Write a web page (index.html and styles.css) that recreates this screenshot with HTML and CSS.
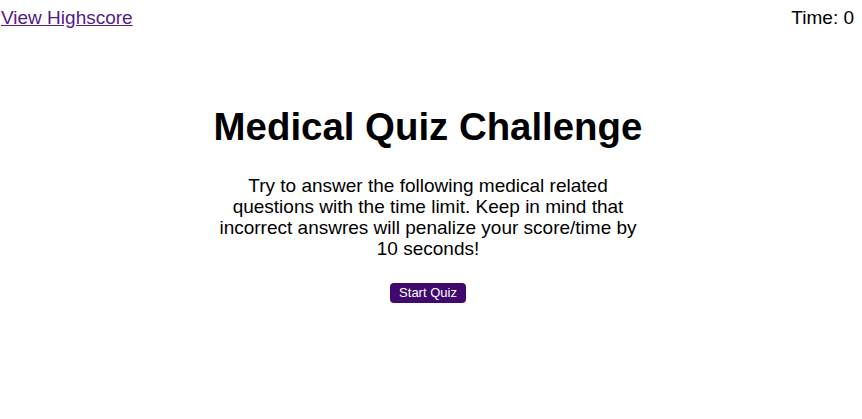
FILE: index.html
```html
<!DOCTYPE html>
<html>
<head>
<meta charset="utf-8">
<link rel="stylesheet" href="styles.css">
</head>
<body>
<header class="top">
  <a href="#" class="hs">View Highscore</a>
  <div class="timer">Time: 0</div>
</header>
<main class="intro">
  <h1 class="title">Medical Quiz Challenge</h1>
  <p class="desc">Try to answer the following medical related questions with the time limit. Keep in mind that incorrect answres will penalize your score/time by 10 seconds!</p>
  <button class="start">Start Quiz</button>
</main>
</body>
</html>
```
FILE: styles.css
```css
body {
  margin: 0;
  font-family: "Liberation Sans", Arial, sans-serif;
  color: #000;
  background: #fff;
}
.top {
  display: flex;
  justify-content: space-between;
  align-items: flex-start;
  padding: 7px 8px 0 1px;
  font-size: 19px;
  line-height: 22px;
}
.hs {
  color: #551a8b;
  text-decoration: underline;
}
.intro {
  display: flex;
  flex-direction: column;
  align-items: center;
  padding-right: 6px;
  margin-top: 76px;
}
.title {
  font-size: 38.4px;
  line-height: 44px;
  font-weight: bold;
  margin: 0 0 26px;
}
.desc {
  width: 431px;
  text-align: center;
  font-size: 19px;
  line-height: 21px;
  margin: 0 0 24px;
}
.start {
  background: #40096b;
  color: #fff;
  border: none;
  border-radius: 4px;
  font-family: "Liberation Sans", Arial, sans-serif;
  font-size: 13px;
  line-height: 15px;
  padding: 2px 9px 3px;
}
```
